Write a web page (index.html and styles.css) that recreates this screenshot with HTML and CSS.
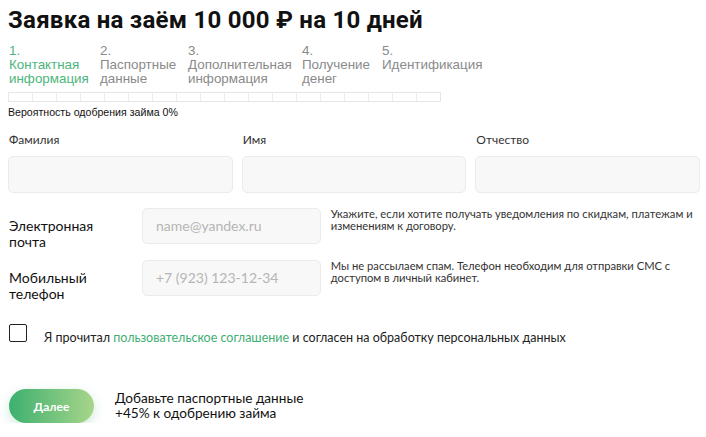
FILE: index.html
```html
<!DOCTYPE html>
<html lang="ru">
<head>
<meta charset="utf-8">
<link rel="stylesheet" href="styles.css">
</head>
<body>
<h1 class="title">Заявка на заём 10 000 ₽ на 10 дней</h1>
<ol class="steps">
  <li class="step step-active" style="width:91px">1.<br>Контактная<br>информация</li>
  <li class="step" style="width:88px">2.<br>Паспортные<br>данные</li>
  <li class="step" style="width:114px">3.<br>Дополнительная<br>информация</li>
  <li class="step" style="width:80px">4.<br>Получение<br>денег</li>
  <li class="step">5.<br>Идентификация</li>
</ol>
<div class="progress">
  <span></span><span></span><span></span><span></span><span></span><span></span>
  <span></span><span></span><span></span><span></span><span></span><span></span>
  <span></span><span></span><span></span><span></span><span></span><span></span>
</div>
<p class="chance">Вероятность одобрения займа 0%</p>
<div class="names">
  <label class="field"><span class="field-label">Фамилия</span><span class="input"></span></label>
  <label class="field"><span class="field-label">Имя</span><span class="input"></span></label>
  <label class="field"><span class="field-label">Отчество</span><span class="input"></span></label>
</div>
<div class="row">
  <div class="row-label">Электронная<br>почта</div>
  <div class="input input-small">name@yandex.ru</div>
  <div class="hint">Укажите, если хотите получать уведомления по скидкам, платежам и изменениям к договору.</div>
</div>
<div class="row">
  <div class="row-label">Мобильный<br>телефон</div>
  <div class="input input-small">+7 (923) 123-12-34</div>
  <div class="hint">Мы не рассылаем спам. Телефон необходим для отправки СМС с доступом в личный кабинет.</div>
</div>
<div class="agree">
  <span class="checkbox"></span>
  <span class="agree-text">Я прочитал <a class="link">пользовательское соглашение</a> и согласен на обработку персональных данных</span>
</div>
<div class="footer">
  <button class="btn">Далее</button>
  <div class="promo">Добавьте паспортные данные<br>+45% к одобрению займа</div>
</div>
</body>
</html>
```
FILE: styles.css
```css
* { box-sizing: border-box; }
html, body { margin: 0; background: #fff; }
body {
  padding: 6px 6px 0 8px;
  font-family: "Open Sans", "Liberation Sans", sans-serif;
  color: #111;
  width: 706px;
}
.title {
  margin: 0;
  font-family: "Roboto", "Liberation Sans", sans-serif;
  font-weight: 700;
  font-size: 24px;
  line-height: 28px;
  color: #111;
  letter-spacing: 0.25px;
}
.steps {
  list-style: none;
  margin: 10px 0 0 1px;
  padding: 0;
  display: flex;
  font-family: "Liberation Sans", Arial, sans-serif;
  font-size: 13.4px;
  line-height: 14px;
  color: #8a8a8a;
}
.step { flex: none; }
.step-active { color: #4cb57c; }
.progress {
  margin-top: 6px;
  width: 433px;
  height: 10px;
  border: 1px solid #e6e6e6;
  display: flex;
}
.progress span {
  flex: 1;
  border-right: 1px solid #ececec;
}
.progress span:last-child { border-right: 0; }
.chance {
  margin: 3px 0 0;
  font-family: "Liberation Sans", Arial, sans-serif;
  font-size: 10.6px;
  line-height: 14px;
  color: #111;
}
.names {
  margin-top: 13px;
  display: grid;
  grid-template-columns: repeat(3, 1fr);
  gap: 9px;
}
.field { display: flex; flex-direction: column; }
.field-label {
  font-family: "Lato", sans-serif;
  font-size: 12px;
  line-height: 16px;
  color: #333;
  padding-left: 1px;
}
.input {
  display: block;
  background: #f8f8f8;
  border: 1px solid #ebebeb;
  border-radius: 5px;
}
.field .input { margin-top: 8px; height: 37px; }
.row {
  display: flex;
  align-items: flex-start;
  margin-top: 15px;
  height: 48px;
}
.row + .row { margin-top: 4px; }
.row-label {
  width: 135px;
  padding: 10px 0 0 1px;
  font-family: "Lato", sans-serif;
  font-size: 14px;
  line-height: 16px;
  color: #111;
}
.input-small {
  width: 180px;
  height: 36px;
  padding-left: 13px;
  font-family: "Lato", sans-serif;
  font-size: 14px;
  line-height: 34px;
  color: #b5b5b5;
}
.hint {
  width: 372px;
  margin-left: 10px;
  padding-top: 0;
  font-family: "Lato", sans-serif;
  font-size: 11.2px;
  line-height: 12px;
  color: #333;
}
.agree {
  display: flex;
  align-items: flex-start;
  margin-top: 16px;
}
.checkbox {
  width: 18px;
  height: 18px;
  margin-left: 1px;
  border: 1.5px solid #222;
  border-radius: 2px;
  flex: none;
}
.agree-text {
  margin-left: 17px;
  margin-top: 6px;
  font-family: "Lato", sans-serif;
  font-size: 12.5px;
  line-height: 16px;
  color: #222;
}
.link { color: #3fae73; }
.footer {
  display: flex;
  align-items: center;
  margin-top: 43px;
}
.btn {
  width: 85px;
  height: 34px;
  margin-left: 1px;
  border: 0;
  border-radius: 17px;
  background: linear-gradient(90deg, #3db06f 0%, #a7d58a 100%);
  box-shadow: 0 4px 12px rgba(60, 176, 110, 0.25);
  color: #fff;
  font-family: "Lato", sans-serif;
  font-weight: 700;
  font-size: 12px;
}
.promo {
  margin-left: 21px;
  font-family: "Lato", sans-serif;
  font-size: 13.6px;
  line-height: 15px;
  color: #111;
}
```
